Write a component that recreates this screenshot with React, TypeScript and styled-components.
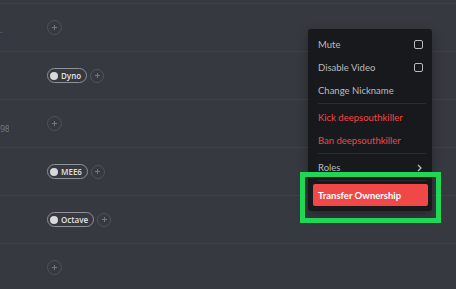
import styled, { createGlobalStyle } from "styled-components";

const GlobalStyle = createGlobalStyle`
  html, body {
    margin: 0;
    padding: 0;
    background: #36393f;
    overflow: hidden;
  }
  body {
    font-family: "Lato", "Noto Sans", sans-serif;
  }
`;

const Page = styled.div`
  position: relative;
  width: 456px;
  height: 289px;
  background: #36393f;
  overflow: hidden;
`;

const List = styled.div`
  padding-top: 3px;
`;

const Row = styled.div`
  display: flex;
  align-items: center;
  height: 47px;
  border-top: 1px solid #3f4248;
`;

const NameCell = styled.div`
  width: 9px;
  height: 100%;
  display: flex;
  align-items: center;
  overflow: hidden;
  flex-shrink: 0;
`;

const NameText = styled.span<{ $offset: number }>`
  white-space: nowrap;
  font-family: "Noto Sans", sans-serif;
  font-size: 9px;
  letter-spacing: -0.3px;
  color: #72767d;
  transform: translateY(${({ $offset }) => $offset}px);
`;

const Roles = styled.div`
  display: flex;
  align-items: center;
  gap: 3px;
  margin-left: 38px;
`;

const RolePill = styled.div`
  display: flex;
  align-items: center;
  gap: 3px;
  height: 13px;
  padding: 0 5px 0 2px;
  border: 1px solid #8e9297;
  border-radius: 8px;
  font-family: "Noto Sans", sans-serif;
  font-size: 8px;
  font-weight: 600;
  color: #dcddde;
`;

const RoleDot = styled.span`
  width: 8px;
  height: 8px;
  border-radius: 50%;
  background: #d7d8da;
`;

const AddRole = styled.div<{ $size: number }>`
  width: ${({ $size }) => $size}px;
  height: ${({ $size }) => $size}px;
  box-sizing: border-box;
  border: 1px solid #4f535a;
  border-radius: 50%;
  display: flex;
  align-items: center;
  justify-content: center;
`;

const Menu = styled.div`
  position: absolute;
  left: 308px;
  top: 29px;
  width: 124px;
  box-sizing: border-box;
  padding: 5px 4px 5px 5px;
  background: #18191c;
  border-radius: 3px;
  box-shadow: 0 4px 12px rgba(0, 0, 0, 0.3);
`;

const Item = styled.div<{ $danger?: boolean }>`
  display: flex;
  align-items: center;
  justify-content: space-between;
  height: 21px;
  margin-bottom: 2px;
  padding: 0 6px 0 5px;
  font-size: 9.5px;
  font-weight: 400;
  color: ${({ $danger }) => ($danger ? "#f04747" : "#b9bbbe")};
`;

const DangerButton = styled(Item)`
  height: 22px;
  margin-bottom: 0;
  border-radius: 2px;
  background: #f04747;
  color: #ffffff;
  font-weight: 700;
`;

const Separator = styled.div`
  height: 1px;
  margin: 2px 2px 3px 5px;
  background: #2a2c30;
`;

const Checkbox = styled.span`
  width: 9px;
  height: 9px;
  box-sizing: border-box;
  border: 1.5px solid #b9bbbe;
  border-radius: 2px;
  margin-right: -1px;
`;

const Highlight = styled.div`
  position: absolute;
  left: 300px;
  top: 172px;
  width: 141px;
  height: 51px;
  box-sizing: border-box;
  border: 5px solid #1fd655;
  pointer-events: none;
`;

function Plus() {
  return (
    <svg width="7" height="7" viewBox="0 0 7 7">
      <path d="M3.5 1v5M1 3.5h5" stroke="#72767d" strokeWidth="1" />
    </svg>
  );
}

function Chevron() {
  return (
    <svg width="5" height="8" viewBox="0 0 5 8">
      <path d="M1 1l3 3-3 3" stroke="#b9bbbe" strokeWidth="1.3" fill="none" />
    </svg>
  );
}

const rows: { name: string; offset: number; role?: string }[] = [
  { name: ".", offset: 2 },
  { name: "", offset: 0, role: "Dyno" },
  { name: "98", offset: 5 },
  { name: "", offset: 0, role: "MEE6" },
  { name: "", offset: 0, role: "Octave" },
  { name: "", offset: 0 },
];

export default function App() {
  return (
    <Page>
      <GlobalStyle />
      <List>
        {rows.map((row, i) => (
          <Row key={i}>
            <NameCell>
              <NameText $offset={row.offset}>{row.name}</NameText>
            </NameCell>
            <Roles>
              {row.role ? (
                <>
                  <RolePill>
                    <RoleDot />
                    {row.role}
                  </RolePill>
                  <AddRole $size={14}>
                    <Plus />
                  </AddRole>
                </>
              ) : (
                <AddRole $size={15}>
                  <Plus />
                </AddRole>
              )}
            </Roles>
          </Row>
        ))}
      </List>

      <Menu>
        <Item>
          Mute
          <Checkbox />
        </Item>
        <Item>
          Disable Video
          <Checkbox />
        </Item>
        <Item>Change Nickname</Item>
        <Separator />
        <Item $danger>Kick deepsouthkiller</Item>
        <Item $danger>Ban deepsouthkiller</Item>
        <Separator />
        <Item>
          Roles
          <Chevron />
        </Item>
        <Separator />
        <DangerButton>Transfer Ownership</DangerButton>
      </Menu>
      <Highlight />
    </Page>
  );
}
